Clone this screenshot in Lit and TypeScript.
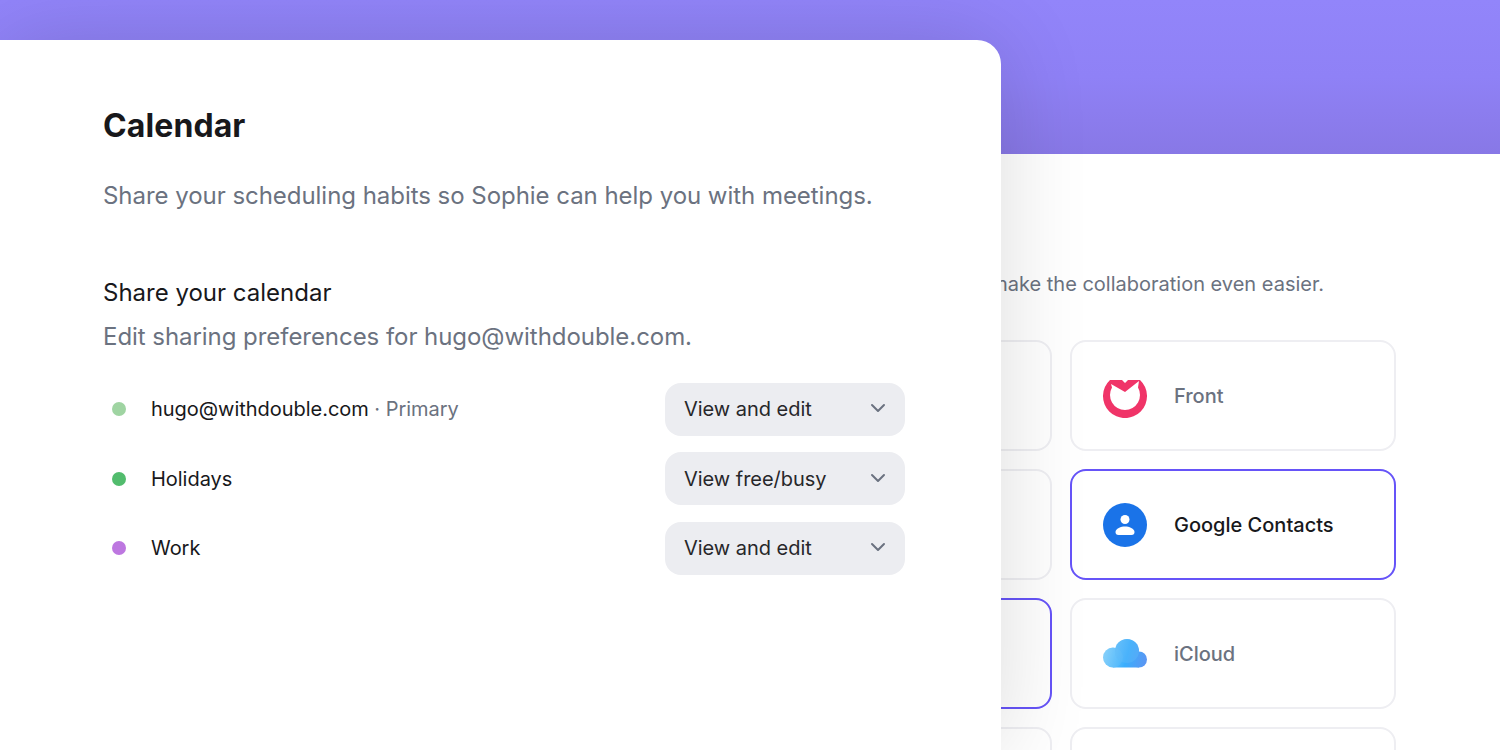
import { LitElement, html, css, svg } from "lit";
import { customElement } from "lit/decorators.js";

const calendars = [
  { color: "#9fd4a2", name: "hugo@withdouble.com", note: "Primary", access: "View and edit" },
  { color: "#52bc6d", name: "Holidays", note: "", access: "View free/busy" },
  { color: "#bd77e0", name: "Work", note: "", access: "View and edit" },
];

const frontIcon = svg`<svg width="44" height="44" viewBox="0 0 44 44">
  <path fill="#f03468" d="M7 6 L19 6 L22 9 L25 6 L37 6 A22 22 0 1 1 7 6 Z"/>
  <path fill="#fff" d="M8 10 L22 18 L36 7 L35 13.500 A15 15 0 1 1 9 13.500 Z"/>
</svg>`;

const contactsIcon = svg`<svg width="44" height="44" viewBox="0 0 44 44">
  <circle cx="22" cy="22" r="22" fill="#1a73e8"/>
  <circle cx="22" cy="16.500" r="4.500" fill="#fff"/>
  <path fill="#fff" d="M12.500 29 C12.500 25.500 18 23.500 22 23.500 C26 23.500 31.500 25.500 31.500 29 C31.500 30.800 30.500 32 28.500 32 L15.500 32 C13.500 32 12.500 30.800 12.500 29 Z"/>
</svg>`;

const cloudIcon = svg`<svg width="44" height="30" viewBox="0 0 44 30">
  <defs>
    <linearGradient id="cloud" gradientUnits="userSpaceOnUse" x1="0" y1="10" x2="44" y2="22">
      <stop offset="0" stop-color="#8fd4fb"/>
      <stop offset="0.550" stop-color="#3aaefd"/>
      <stop offset="1" stop-color="#5c95f2"/>
    </linearGradient>
  </defs>
  <g fill="url(#cloud)">
    <circle cx="10" cy="18.500" r="10"/>
    <circle cx="24" cy="12" r="12"/>
    <circle cx="36" cy="20.500" r="8"/>
    <rect x="10" y="16" width="26" height="12.500"/>
  </g>
  <circle cx="10" cy="18.500" r="10" fill="#7fcffc" opacity="0.200"/>
  <circle cx="24" cy="12" r="12" fill="#62b9f7" opacity="0.400"/>
</svg>`;

@customElement("app-root")
export class AppRoot extends LitElement {
  static styles = css`
    :host {
      display: block;
      width: 1500px;
      height: 750px;
      position: relative;
      overflow: hidden;
      background: #fff;
      font-family: Inter, "Liberation Sans", sans-serif;
    }
    .banner {
      height: 154px;
      background: linear-gradient(180deg, #9285fa 0%, #8f81f6 50%, #8878e6 100%);
    }
    .back {
      padding: 118px 104px 0 726px;
    }
    .lead {
      margin: 0;
      width: 598px;
      line-height: 24px;
      font-size: 20px;
      color: #6b7280;
      white-space: nowrap;
      text-align: right;
    }
    .cards {
      margin-top: 44px;
      display: grid;
      grid-template-columns: 326px 326px;
      grid-auto-rows: 111px;
      gap: 18px;
    }
    .card {
      box-sizing: border-box;
      border: 2px solid #eeeef2;
      border-radius: 16px;
      background: #fff;
      display: flex;
      align-items: center;
      gap: 27px;
      padding-left: 31px;
      font-size: 20px;
      font-weight: 450;
      color: #6b7280;
    }
    .card.selected {
      border-color: #6654f8;
      color: #18181b;
    }
    .icon {
      width: 44px;
      display: flex;
      justify-content: center;
    }
    .icon svg {
      display: block;
    }
    .panel {
      position: absolute;
      left: 0;
      top: 40px;
      bottom: 0;
      width: 1001px;
      box-sizing: border-box;
      padding: 64px 96px 0 103px;
      background: #fff;
      border-top-right-radius: 24px;
      box-shadow: 0 0 90px rgba(0, 0, 0, 0.14);
    }
    h1 {
      margin: 0;
      font-size: 32px;
      line-height: 44px;
      font-weight: 700;
      letter-spacing: 0.1px;
      color: #18181b;
    }
    .sub {
      margin: 30px 0 0;
      font-size: 24px;
      line-height: 36px;
      letter-spacing: -0.04px;
      color: #6b7280;
    }
    h2 {
      margin: 61px 0 0;
      font-size: 24px;
      line-height: 36px;
      font-weight: 400;
      color: #18181b;
    }
    .hint {
      margin: 8px 0 0;
      font-size: 24px;
      line-height: 36px;
      letter-spacing: -0.05px;
      color: #6b7280;
    }
    .list {
      margin-top: 27.5px;
      display: flex;
      flex-direction: column;
      gap: 16.5px;
    }
    .row {
      height: 53px;
      display: flex;
      align-items: center;
      font-size: 20px;
      letter-spacing: -0.03px;
      color: #18181b;
    }
    .dot {
      width: 14px;
      height: 14px;
      border-radius: 50%;
      margin: 0 25px 0 9px;
    }
    .name {
      flex: 1;
    }
    .note {
      color: #6b7280;
    }
    .select {
      box-sizing: border-box;
      width: 240px;
      height: 53px;
      padding: 0 19px;
      border-radius: 16px;
      background: #ecedf1;
      display: flex;
      align-items: center;
      justify-content: space-between;
      color: #27272a;
    }
    .select svg {
      display: block;
      margin-top: -2px;
    }
  `;

  render() {
    return html`
      <div class="banner"></div>
      <div class="back">
        <p class="lead">make the collaboration even easier.</p>
        <div class="cards">
          <div class="card"></div>
          <div class="card"><span class="icon">${frontIcon}</span>Front</div>
          <div class="card"></div>
          <div class="card selected"><span class="icon">${contactsIcon}</span>Google Contacts</div>
          <div class="card selected"></div>
          <div class="card"><span class="icon">${cloudIcon}</span>iCloud</div>
          <div class="card"></div>
          <div class="card"></div>
        </div>
      </div>
      <section class="panel">
        <h1>Calendar</h1>
        <p class="sub">Share your scheduling habits so Sophie can help you with meetings.</p>
        <h2>Share your calendar</h2>
        <p class="hint">Edit sharing preferences for hugo@withdouble.com.</p>
        <div class="list">
          ${calendars.map(
            (c) => html`
              <div class="row">
                <span class="dot" style="background: ${c.color}"></span>
                <span class="name">${c.name}${c.note ? html`<span class="note"> · ${c.note}</span>` : ""}</span>
                <div class="select">
                  ${c.access}
                  <svg width="16" height="10" viewBox="0 0 16 10" fill="none" stroke="#6b7280" stroke-width="2" stroke-linecap="round" stroke-linejoin="round">
                    <path d="M2 2l6 6 6-6" />
                  </svg>
                </div>
              </div>
            `
          )}
        </div>
      </section>
    `;
  }
}
